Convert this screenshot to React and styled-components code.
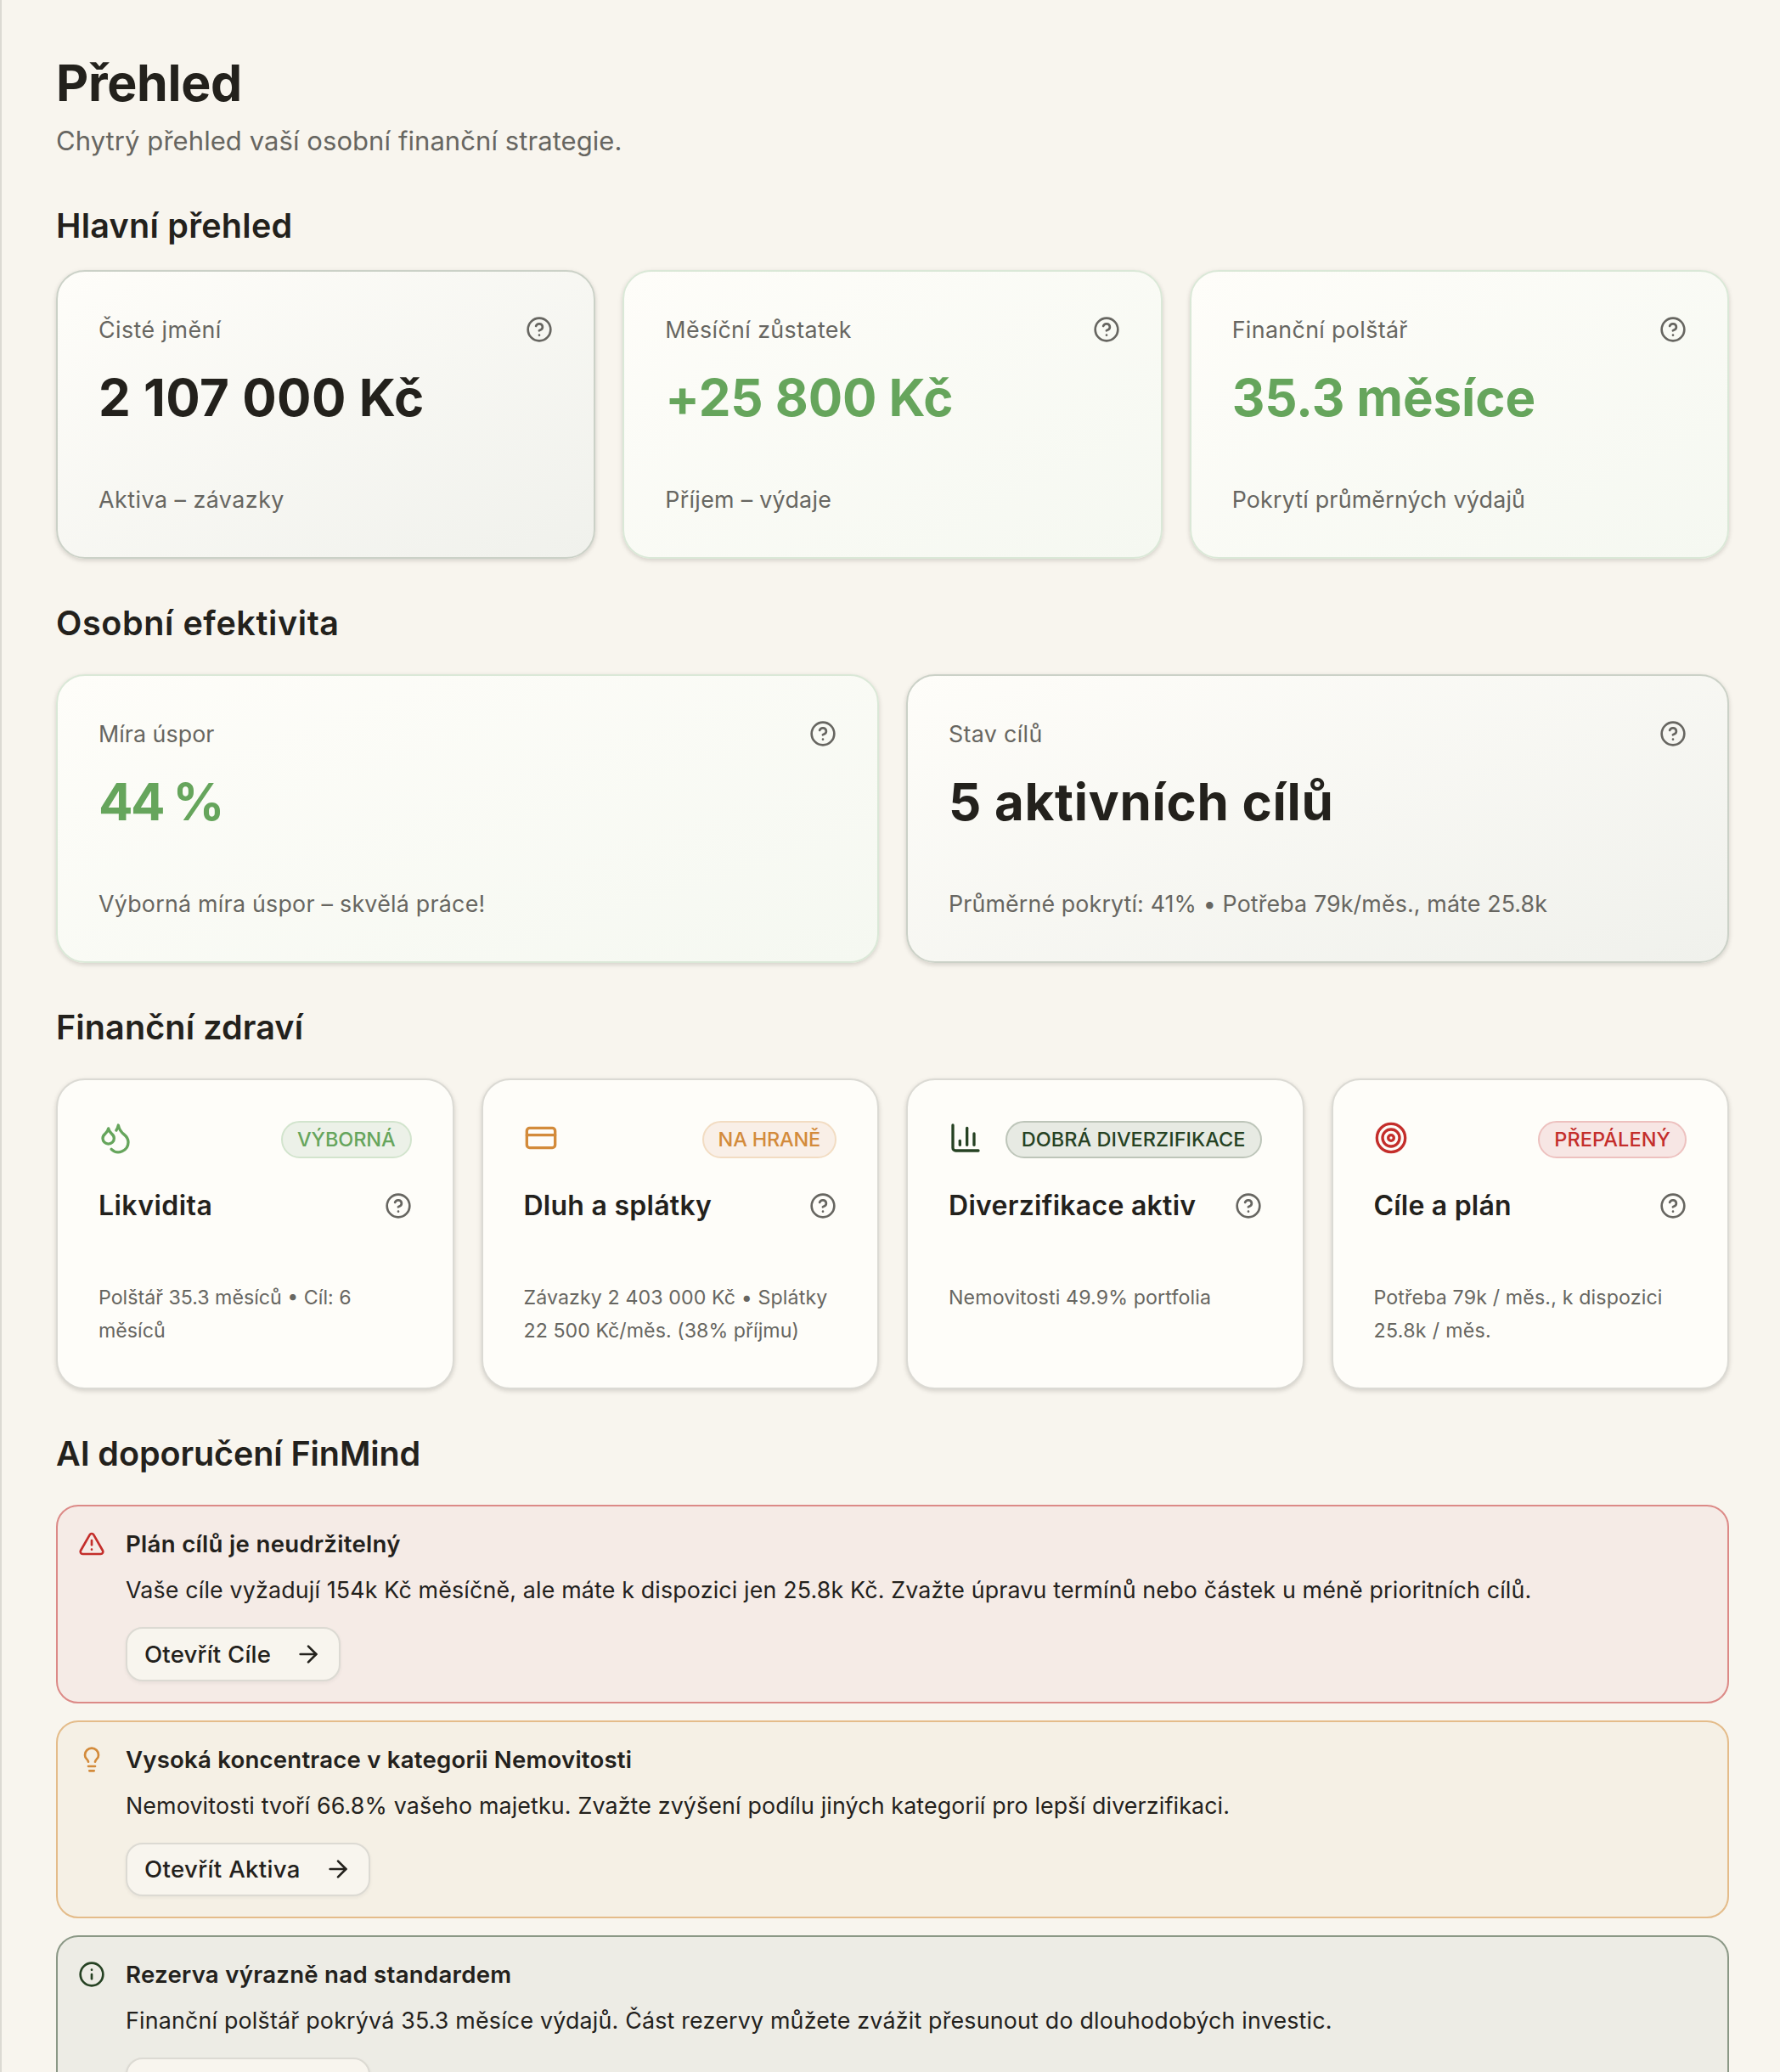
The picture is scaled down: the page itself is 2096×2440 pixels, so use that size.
import styled, { createGlobalStyle } from 'styled-components';
import {
  ArrowRight,
  CircleHelp,
  CreditCard,
  Info,
  Lightbulb,
  Target,
  TriangleAlert,
} from 'lucide-react';

const colors = {
  text: '#23211c',
  muted: '#676661',
  green: '#66a55c',
  forest: '#264223',
  orange: '#d38b3b',
  red: '#c42e2b',
};

// the numbers next to texts are letter spacings in px
const mainMetrics = [
  {
    label: ['Čisté jmění', 0.45],
    value: ['2 107 000 Kč', 0.48],
    note: ['Aktiva – závazky', 0.5],
  },
  {
    label: ['Měsíční zůstatek', 0.4],
    value: ['+25 800 Kč', -0.1],
    note: ['Příjem – výdaje', 0.3],
    positive: true,
  },
  {
    label: ['Finanční polštář', 0.36],
    value: ['35.3 měsíce', -0.12],
    note: ['Pokrytí průměrných výdajů', 0.2],
    positive: true,
  },
];

const efficiencyMetrics = [
  {
    label: ['Míra úspor', 0.05],
    value: ['44 %', -2.6],
    note: ['Výborná míra úspor – skvělá práce!', 0.25],
    positive: true,
  },
  {
    label: ['Stav cílů', 0.35],
    value: ['5 aktivních cílů', 0.72],
    note: ['Průměrné pokrytí: 41% • Potřeba 79k/měs., máte 25.8k', 0.13],
  },
];

const healthItems = [
  {
    title: ['Likvidita', 0.45],
    status: ['VÝBORNÁ', -0.1],
    note: [
      ['Polštář 35.3 měsíců • Cíl: 6', 0],
      ['měsíců', 0],
    ],
    icon: DropletsIcon,
    color: colors.green,
    background: '#ecf1e8',
    border: '#d2e4cd',
  },
  {
    title: ['Dluh a splátky', 0.26],
    status: ['NA HRANĚ', -0.2],
    note: [
      ['Závazky 2 403 000 Kč • Splátky', 0.1],
      ['22 500 Kč/měs. (38% příjmu)', 0.03],
    ],
    icon: CreditCard,
    color: colors.orange,
    background: '#f9efe7',
    border: '#f2dcc2',
  },
  {
    title: ['Diverzifikace aktiv', 0.28],
    status: ['DOBRÁ DIVERZIFIKACE', 0.04],
    note: [['Nemovitosti 49.9% portfolia', 0.12]],
    icon: ChartIcon,
    color: colors.forest,
    background: '#e7eae3',
    border: '#bdc5b9',
  },
  {
    title: ['Cíle a plán', 0.2],
    status: ['PŘEPÁLENÝ', 0.08],
    note: [
      ['Potřeba 79k / měs., k dispozici', 0.14],
      ['25.8k / měs.', 0.3],
    ],
    icon: Target,
    color: colors.red,
    background: '#f7e6e4',
    border: '#edc1bf',
  },
];

const recommendations = [
  {
    title: ['Plán cílů je neudržitelný', 0.3],
    body: [
      'Vaše cíle vyžadují 154k Kč měsíčně, ale máte k dispozici jen 25.8k Kč. Zvažte úpravu termínů nebo částek u méně prioritních cílů.',
      0.163,
    ],
    action: ['Otevřít Cíle', 0.18],
    icon: TriangleAlert,
    color: colors.red,
    background: '#f5ebe6',
    border: '#dc8a87',
  },
  {
    title: ['Vysoká koncentrace v kategorii Nemovitosti', 0.2],
    body: [
      'Nemovitosti tvoří 66.8% vašeho majetku. Zvažte zvýšení podílu jiných kategorií pro lepší diverzifikaci.',
      0.145,
    ],
    action: ['Otevřít Aktiva', 0.33],
    icon: Lightbulb,
    color: colors.orange,
    background: '#f5f0e5',
    border: '#e4bc8a',
  },
  {
    title: ['Rezerva výrazně nad standardem', 0.27],
    body: [
      'Finanční polštář pokrývá 35.3 měsíce výdajů. Část rezervy můžete zvážit přesunout do dlouhodobých investic.',
      0.2,
    ],
    action: ['Otevřít Aktiva', 0.33],
    icon: Info,
    color: colors.forest,
    background: '#edece5',
    border: '#8b9886',
  },
];

function DropletsIcon({ size, color }) {
  return (
    <svg
      width={size}
      height={size}
      viewBox="0 0 24 24"
      fill="none"
      stroke={color}
      strokeWidth="2"
      strokeLinecap="round"
      strokeLinejoin="round"
    >
      <path d="M7 16.3c2.2 0 4-1.83 4-4.05 0-1.16-.57-2.26-1.71-3.19S7.29 6.75 7 5.3c-.29 1.45-1.14 2.84-2.29 3.76S3 11.1 3 12.25c0 2.22 1.8 4.05 4 4.05z" />
      <path d="M12.56 6.6A10.97 10.97 0 0 0 14 3.02c.5 2.5 2 4.9 4 6.5s3 3.5 3 5.5a6.98 6.98 0 0 1-11.91 4.97" />
    </svg>
  );
}

function ChartIcon({ size, color }) {
  return (
    <svg
      width={size}
      height={size}
      viewBox="0 0 24 24"
      fill="none"
      stroke={color}
      strokeWidth="2"
      strokeLinecap="round"
      strokeLinejoin="round"
    >
      <path d="M3 3v16a2 2 0 0 0 2 2h16" />
      <path d="M18 17V9" />
      <path d="M13 17V5" />
      <path d="M8 17v-3" />
    </svg>
  );
}

function MetricCard({ metric }) {
  const [label, labelTrack] = metric.label;
  const [value, valueTrack] = metric.value;
  const [note, noteTrack] = metric.note;

  return (
    <Metric $positive={metric.positive}>
      <CardRow>
        <Label $track={labelTrack}>{label}</Label>
        <CircleHelp size={32} color={colors.muted} />
      </CardRow>
      <Value $positive={metric.positive} $track={valueTrack}>
        {value}
      </Value>
      <Label $track={noteTrack}>{note}</Label>
    </Metric>
  );
}

function HealthCard({ item }) {
  const Icon = item.icon;
  const [title, titleTrack] = item.title;
  const [status, statusTrack] = item.status;

  return (
    <Health>
      <StatusRow>
        <Icon size={40} color={item.color} />
        <Badge
          $color={item.color}
          $background={item.background}
          $border={item.border}
          $track={statusTrack}
        >
          {status}
        </Badge>
      </StatusRow>
      <CardRow>
        <HealthTitle $track={titleTrack}>{title}</HealthTitle>
        <CircleHelp size={32} color={colors.muted} />
      </CardRow>
      <HealthNote>
        {item.note.map(([line, track]) => (
          <NoteLine key={line} $track={track}>
            {line}
          </NoteLine>
        ))}
      </HealthNote>
    </Health>
  );
}

function Recommendation({ item }) {
  const Icon = item.icon;
  const [title, titleTrack] = item.title;
  const [body, bodyTrack] = item.body;
  const [action, actionTrack] = item.action;

  return (
    <Alert $background={item.background} $border={item.border}>
      <AlertIcon>
        <Icon size={32} color={item.color} />
      </AlertIcon>
      <div>
        <AlertTitle $track={titleTrack}>{title}</AlertTitle>
        <AlertBody $track={bodyTrack}>{body}</AlertBody>
        <ActionButton $track={actionTrack}>
          {action}
          <ArrowRight size={32} />
        </ActionButton>
      </div>
    </Alert>
  );
}

export default function App() {
  return (
    <>
      <GlobalStyle />
      <Page>
        <PageTitle>Přehled</PageTitle>
        <Subtitle>Chytrý přehled vaší osobní finanční strategie.</Subtitle>

        <Section $gap="28px">
          <Heading $track={0.26}>Hlavní přehled</Heading>
          <Grid $columns={3}>
            {mainMetrics.map(metric => (
              <MetricCard key={metric.label[0]} metric={metric} />
            ))}
          </Grid>
        </Section>

        <Section>
          <Heading $track={0.6}>Osobní efektivita</Heading>
          <Grid $columns={2}>
            {efficiencyMetrics.map(metric => (
              <MetricCard key={metric.label[0]} metric={metric} />
            ))}
          </Grid>
        </Section>

        <Section>
          <Heading $track={0.13}>Finanční zdraví</Heading>
          <Grid $columns={4}>
            {healthItems.map(item => (
              <HealthCard key={item.title[0]} item={item} />
            ))}
          </Grid>
        </Section>

        <Section>
          <Heading $track={-0.09}>AI doporučení FinMind</Heading>
          <AlertList>
            {recommendations.map(item => (
              <Recommendation key={item.title[0]} item={item} />
            ))}
          </AlertList>
        </Section>
      </Page>
    </>
  );
}

const GlobalStyle = createGlobalStyle`
  * {
    box-sizing: border-box;
    margin: 0;
    padding: 0;
  }

  body {
    background-color: #f8f5ee;
    color: ${colors.text};
    font-family: Inter, 'Liberation Sans', sans-serif;
    -webkit-font-smoothing: antialiased;
  }
`;

const Page = styled.main`
  height: 2440px;
  padding: 64px 60px 0 64px;
  border-left: 2px solid #dcdad3;
  overflow: hidden;
`;

const PageTitle = styled.h1`
  font-size: 59px;
  font-weight: 700;
  line-height: 68px;
  letter-spacing: -0.3px;
`;

const Subtitle = styled.p`
  margin-top: 8px;
  color: ${colors.muted};
  font-size: 31px;
  line-height: 51px;
  letter-spacing: 0.07px;
`;

const Section = styled.section`
  display: grid;
  gap: ${({ $gap }) => $gap || '36px'};
  margin-top: 52px;

  &:first-of-type {
    margin-top: 51px;
  }
`;

const Heading = styled.h2`
  font-size: 39.5px;
  font-weight: 600;
  line-height: 48px;
  letter-spacing: ${({ $track }) => $track}px;
`;

const Grid = styled.div`
  display: grid;
  grid-template-columns: repeat(${({ $columns }) => $columns}, minmax(0, 1fr));
  gap: 32px;
`;

const Card = styled.article`
  padding: 48px;
  border: 2px solid #dbdad4;
  border-radius: 34px;
  background-color: #fefdf9;
  box-shadow: 0 2px 6px rgba(35, 33, 28, 0.1), 0 2px 4px rgba(35, 33, 28, 0.08);
`;

const Metric = styled(Card)`
  border-color: ${({ $positive }) => ($positive ? '#dae8d7' : '#cbd1c7')};
  background: linear-gradient(
    to bottom right,
    #fefdf9,
    ${({ $positive }) => ($positive ? '#f5f8f1' : '#f0f1ec')}
  );
`;

const Health = styled(Card)`
  height: 366px;
`;

const CardRow = styled.div`
  display: flex;
  align-items: center;
  justify-content: space-between;
  height: 40px;
`;

const Label = styled.p`
  color: ${colors.muted};
  font-size: 26.8px;
  line-height: 40px;
  letter-spacing: ${({ $track }) => $track}px;
  white-space: nowrap;
`;

const Value = styled.p`
  margin: 26px 0 66px;
  color: ${({ $positive }) => ($positive ? colors.green : colors.text)};
  font-size: 60px;
  font-weight: 700;
  line-height: 68px;
  letter-spacing: ${({ $track }) => $track}px;
  white-space: nowrap;
`;

const StatusRow = styled.div`
  display: flex;
  align-items: flex-start;
  justify-content: space-between;
  margin-bottom: 36px;
`;

const Badge = styled.span`
  height: 44px;
  padding: 0 17px;
  border: 2px solid ${({ $border }) => $border};
  border-radius: 22px;
  background-color: ${({ $background }) => $background};
  color: ${({ $color }) => $color};
  font-size: 23.5px;
  font-weight: 500;
  line-height: 40px;
  letter-spacing: ${({ $track }) => $track}px;
  white-space: nowrap;
`;

const HealthTitle = styled.h3`
  font-size: 32px;
  font-weight: 600;
  line-height: 40px;
  letter-spacing: ${({ $track }) => $track}px;
  white-space: nowrap;
`;

const HealthNote = styled.p`
  display: grid;
  margin-top: 69px;
  color: ${colors.muted};
  font-size: 23.2px;
  line-height: 39px;
  white-space: nowrap;
`;

const NoteLine = styled.span`
  letter-spacing: ${({ $track }) => $track}px;
`;

const AlertList = styled.div`
  display: grid;
  gap: 20px;
`;

const Alert = styled.article`
  display: flex;
  gap: 24px;
  padding: 24px;
  border: 2px solid ${({ $border }) => $border};
  border-radius: 26px;
  background-color: ${({ $background }) => $background};
`;

const AlertIcon = styled.div`
  width: 32px;
  height: 32px;
  margin-top: 4px;
`;

const AlertTitle = styled.h3`
  font-size: 27.6px;
  font-weight: 600;
  line-height: 40px;
  letter-spacing: ${({ $track }) => $track}px;
`;

const AlertBody = styled.p`
  margin: 12px 0 22px;
  font-size: 26.8px;
  line-height: 44px;
  letter-spacing: ${({ $track }) => $track}px;
  white-space: nowrap;
`;

const ActionButton = styled.button`
  display: flex;
  align-items: center;
  gap: 28px;
  height: 63.5px;
  padding: 0 20px;
  border: 2px solid #dcdad3;
  border-radius: 20px;
  background-color: #f8f5ee;
  box-shadow: 0 2px 4px rgba(35, 33, 28, 0.06);
  color: ${colors.text};
  font: 500 27.6px Inter, 'Liberation Sans', sans-serif;
  letter-spacing: ${({ $track }) => $track}px;
`;
